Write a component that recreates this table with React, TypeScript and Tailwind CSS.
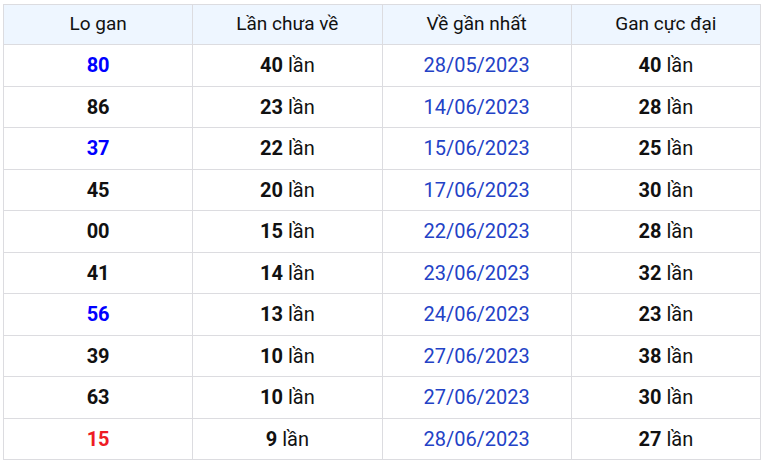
import React from "react";

type Row = { lo: string; color: string; chua: string; ve: string; max: string };

const rows: Row[] = [
  { lo: "80", color: "text-[#0000ff]", chua: "40", ve: "28/05/2023", max: "40" },
  { lo: "86", color: "text-[#111111]", chua: "23", ve: "14/06/2023", max: "28" },
  { lo: "37", color: "text-[#0000ff]", chua: "22", ve: "15/06/2023", max: "25" },
  { lo: "45", color: "text-[#111111]", chua: "20", ve: "17/06/2023", max: "30" },
  { lo: "00", color: "text-[#111111]", chua: "15", ve: "22/06/2023", max: "28" },
  { lo: "41", color: "text-[#111111]", chua: "14", ve: "23/06/2023", max: "32" },
  { lo: "56", color: "text-[#0000ff]", chua: "13", ve: "24/06/2023", max: "23" },
  { lo: "39", color: "text-[#111111]", chua: "10", ve: "27/06/2023", max: "38" },
  { lo: "63", color: "text-[#111111]", chua: "10", ve: "27/06/2023", max: "30" },
  { lo: "15", color: "text-[#ee1c25]", chua: "9", ve: "28/06/2023", max: "27" },
];

export default function App() {
  return (
    <div className="w-[763px] h-[463px] bg-white pl-[3px] pt-[4px]" style={{ fontFamily: "Roboto, 'Noto Sans', sans-serif" }}>
      <table className="w-[758px] border-collapse table-fixed text-[#111111]">
        <thead>
          <tr className="h-[40px] bg-[#eef6ff]">
            {["Lo gan", "Lần chưa về", "Về gần nhất", "Gan cực đại"].map((h) => (
              <th key={h} className="border border-[#dcdce0] font-normal text-[19px] text-center p-0">
                {h}
              </th>
            ))}
          </tr>
        </thead>
        <tbody>
          {rows.map((r, i) => (
            <tr key={i} className="h-[41.5px]">
              <td className={`border border-[#dcdce0] text-center text-[20px] font-bold p-0 ${r.color}`}>{r.lo}</td>
              <td className="border border-[#dcdce0] text-center text-[20px] p-0">
                <b className="font-bold">{r.chua}</b> lần
              </td>
              <td className="border border-[#dcdce0] text-center text-[20px] p-0 text-[#2342c6]">{r.ve}</td>
              <td className="border border-[#dcdce0] text-center text-[20px] p-0">
                <b className="font-bold">{r.max}</b> lần
              </td>
            </tr>
          ))}
        </tbody>
      </table>
    </div>
  );
}
